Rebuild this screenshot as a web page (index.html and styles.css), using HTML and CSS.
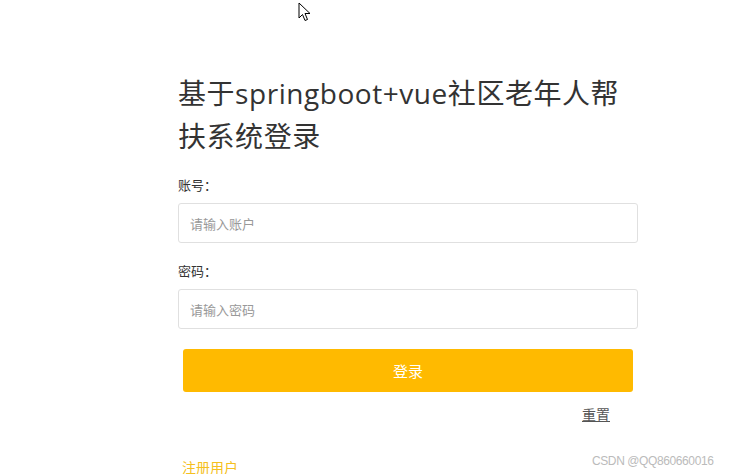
FILE: index.html
```html
<!DOCTYPE html>
<html lang="zh">
<head>
<meta charset="utf-8">
<title>登录</title>
<link rel="stylesheet" href="styles.css">
</head>
<body>
<div class="login">
  <h1 class="title">基于springboot+vue社区老年人帮扶系统登录</h1>
  <div class="field">
    <label class="label">账号：</label>
    <input class="input" type="text" placeholder="请输入账户">
  </div>
  <div class="field">
    <label class="label">密码：</label>
    <input class="input" type="password" placeholder="请输入密码">
  </div>
  <button class="btn">登录</button>
  <div class="reset-row"><a class="reset">重置</a></div>
  <a class="register">注册用户</a>
</div>
<div class="watermark">CSDN @QQ860660016</div>
<svg class="cursor" width="13" height="20" viewBox="0 0 13 20">
  <path d="M1 1 L1 16 L4.5 12.5 L7 18.5 L9.5 17.5 L7 11.5 L12 11.5 Z" fill="#fff" stroke="#000" stroke-width="1" stroke-linejoin="round"/>
</svg>
</body>
</html>
```
FILE: styles.css
```css
html, body {
  margin: 0;
  padding: 0;
  background: #fff;
  font-family: "Noto Sans CJK SC", "Noto Sans", sans-serif;
  color: #333;
  height: 474px;
  overflow: hidden;
}
.login {
  width: 460px;
  margin-left: 178px;
  padding-top: 72px;
  display: flex;
  flex-direction: column;
}
.title {
  margin: 0;
  font-family: "Open Sans", "Noto Sans CJK SC", sans-serif;
  font-size: 28px;
  font-weight: normal;
  line-height: 43px;
  letter-spacing: 0.55px;
  color: #333;
}
.field {
  display: flex;
  flex-direction: column;
  gap: 8px;
  margin-top: 17px;
}
.field + .field {
  margin-top: 18px;
}
.label {
  font-size: 13px;
  line-height: 20px;
  color: #333;
}
.input {
  box-sizing: border-box;
  height: 40px;
  width: 100%;
  border: 1px solid #e0e0e0;
  border-radius: 3px;
  padding: 0 11px;
  font-family: inherit;
  font-size: 13px;
  color: #333;
  outline: none;
}
.input::placeholder {
  color: #999;
}
.btn {
  margin: 20px 5px 0;
  height: 43px;
  border: none;
  border-radius: 3px;
  background: #ffba00;
  color: #fff;
  font-family: inherit;
  font-size: 15px;
  cursor: pointer;
}
.reset-row {
  display: flex;
  justify-content: flex-end;
  padding-right: 28px;
  margin-top: 12px;
}
.reset {
  font-size: 14px;
  line-height: 20px;
  color: #555;
  text-decoration: underline;
  cursor: pointer;
}
.register {
  margin-top: 33px;
  margin-left: 4px;
  font-size: 14px;
  line-height: 20px;
  color: #f5c020;
  cursor: pointer;
}
.watermark {
  position: absolute;
  left: 592px;
  top: 453px;
  font-family: "Liberation Sans", sans-serif;
  font-size: 12px;
  line-height: 16px;
  color: #bbb;
  letter-spacing: -0.4px;
}
.cursor {
  position: absolute;
  left: 298px;
  top: 2px;
}
```
